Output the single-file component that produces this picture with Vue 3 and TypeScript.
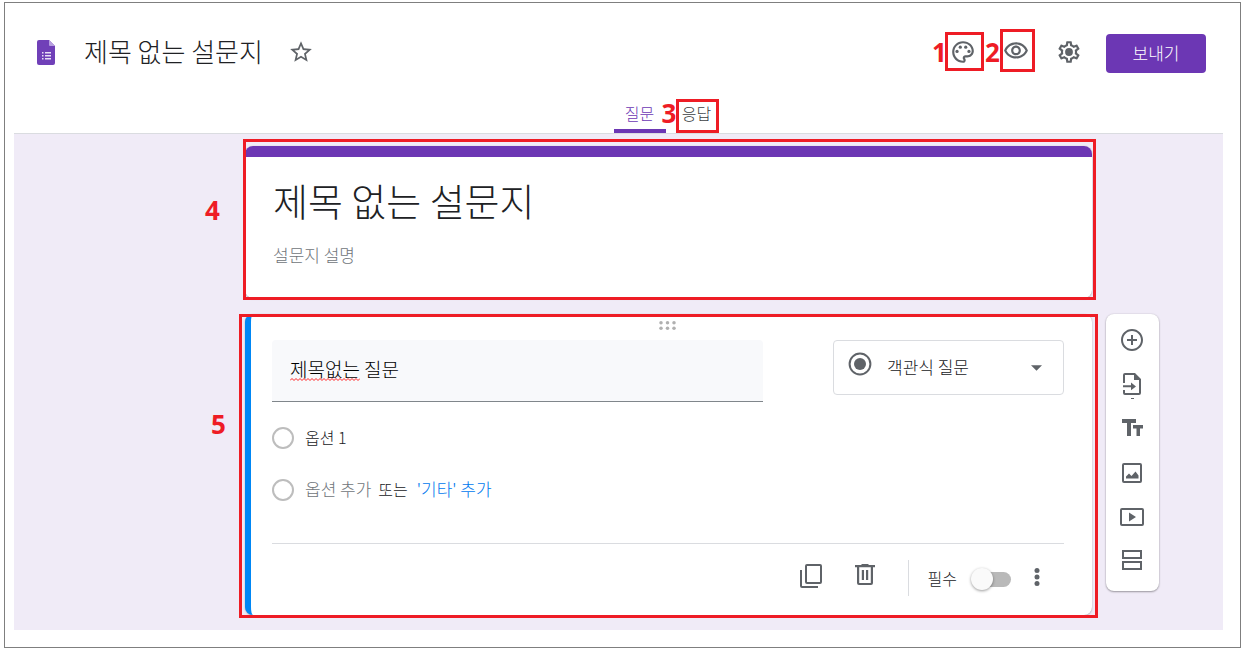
<script setup lang="ts">
import { ref } from 'vue'

interface Tool {
  label: string
  path: string
}

const formName = ref('제목 없는 설문지')
const formTitle = ref('제목 없는 설문지')
const description = ref('')
const question = ref('제목없는 질문')
const option = ref('옵션 1')
const kind = ref('객관식 질문')
const required = ref(false)
const tab = ref('questions')

const tools: Tool[] = [
  {
    label: '질문 추가',
    path: 'M13 7h-2v4H7v2h4v4h2v-4h4v-2h-4V7zm-1-6C5.93 1 1 5.93 1 12s4.93 11 11 11 11-4.93 11-11S18.07 1 12 1zm0 20c-4.96 0-9-4.04-9-9s4.04-9 9-9 9 4.04 9 9-4.04 9-9 9z',
  },
  {
    label: '질문 가져오기',
    path: 'M3 11V3a2 2 0 0 1 2-2h10l6 6v14a2 2 0 0 1-2 2H5a2 2 0 0 1-2-2v-3h2v3h14V8h-5V3H5v8zM3 13.3h8V10.500l5 3.900-5 3.900v-3H3zM11 26h3v1h-3z',
  },
  {
    label: '제목 및 설명 추가',
    path: 'M2 3h14v4h-5v13H7V7H2zM13 9h10v3.500h-3V20h-3.500v-7.500H13z',
  },
  {
    label: '이미지 추가',
    path: 'M4 3h16a2 2 0 0 1 2 2v16a2 2 0 0 1-2 2H4a2 2 0 0 1-2-2V5a2 2 0 0 1 2-2zm0 2v16h16V5zM6 18.500v-2l3-3 2.500 2.500 4-4.500 3 4v3z',
  },
  {
    label: '동영상 추가',
    path: 'M2 4h20a2 2 0 0 1 2 2v14a2 2 0 0 1-2 2H2a2 2 0 0 1-2-2V6a2 2 0 0 1 2-2zm0 2v14h20V6zM9 8.500l7 4.500-7 4.500z',
  },
  {
    label: '섹션 추가',
    path: 'M2 2h20v9H2zm2 2v5h16V4zM2 13h20v9H2zm2 2v5h16v-5z',
  },
]
</script>

<template>
  <div class="frame">
    <header>
      <div class="bar">
        <svg class="logo" viewBox="0 0 18 25" aria-hidden="true">
          <path d="M2 0h10l6 6v17a2 2 0 0 1-2 2H2a2 2 0 0 1-2-2V2a2 2 0 0 1 2-2z" fill="#7040b8" />
          <path d="M12 0l6 6h-5a1 1 0 0 1-1-1z" fill="#b79fe0" />
          <path d="M5 12h1.500v1.500H5zm0 3h1.500v1.500H5zm0 3h1.500v1.500H5zm3-6h6v1.500H8zm0 3h6v1.500H8zm0 3h6v1.500H8z" fill="#e8dff5" />
        </svg>
        <input v-model="formName" class="form-name" aria-label="설문지 이름" />
        <button class="icon-btn star" aria-label="별표">
          <svg viewBox="0 0 24 24"><path d="M22 9.24l-7.19-.62L12 2 9.190 8.630 2 9.240l5.460 4.730L5.820 21 12 17.270 18.180 21l-1.630-7.030L22 9.240zM12 15.400l-3.760 2.270 1-4.280-3.320-2.880 4.380-.38L12 6.100l1.710 4.040 4.380.38-3.320 2.880 1 4.280L12 15.400z" /></svg>
        </button>
        <div class="actions">
          <div class="marked m1">
            <span class="num">1</span>
            <button class="icon-btn" aria-label="테마 맞춤설정">
              <svg viewBox="0 0 24 24"><path d="M12 22C6.490 22 2 17.510 2 12S6.490 2 12 2s10 4.040 10 9c0 3.310-2.690 6-6 6h-1.770c-.28 0-.5.22-.5.5 0 .12.05.23.13.33.41.47.64 1.060.64 1.670 0 1.380-1.120 2.500-2.500 2.500zm0-18c-4.410 0-8 3.590-8 8s3.590 8 8 8c.28 0 .5-.22.5-.5 0-.16-.08-.28-.14-.35-.41-.46-.63-1.050-.63-1.650 0-1.380 1.120-2.500 2.500-2.500H16c2.210 0 4-1.790 4-4 0-3.860-3.590-7-8-7z" /><circle cx="6.5" cy="11.5" r="1.5" /><circle cx="9.5" cy="7.5" r="1.5" /><circle cx="14.5" cy="7.5" r="1.5" /><circle cx="17.5" cy="11.5" r="1.5" /></svg>
            </button>
          </div>
          <div class="marked m2">
            <span class="num">2</span>
            <button class="icon-btn" aria-label="미리보기">
              <svg viewBox="0 0 24 24"><path d="M12 5c3.790 0 7.170 2.130 8.820 5.500C19.170 13.870 15.790 16 12 16s-7.170-2.130-8.820-5.500C4.830 7.130 8.210 5 12 5m0-2C7 3 2.730 6.110 1 10.500 2.730 14.890 7 18 12 18s9.270-3.110 11-7.500C21.270 6.110 17 3 12 3zm0 5c1.380 0 2.500 1.120 2.500 2.500S13.380 13 12 13s-2.500-1.120-2.500-2.500S10.620 8 12 8m0-2c-2.480 0-4.500 2.020-4.500 4.500S9.520 15 12 15s4.500-2.020 4.500-4.500S14.480 6 12 6z" /></svg>
            </button>
          </div>
          <button class="icon-btn" aria-label="설정">
            <svg viewBox="0 0 24 24"><path d="M19.430 12.980c.04-.32.07-.64.07-.98 0-.34-.03-.66-.07-.98l2.110-1.650c.19-.15.24-.42.12-.64l-2-3.460c-.09-.16-.26-.25-.44-.25-.06 0-.12.01-.17.03l-2.490 1c-.52-.4-1.080-.73-1.690-.98l-.38-2.650C14.460 2.180 14.250 2 14 2h-4c-.25 0-.46.18-.49.42l-.38 2.650c-.61.25-1.170.59-1.690.98l-2.490-1c-.06-.02-.12-.03-.18-.03-.17 0-.34.09-.43.25l-2 3.460c-.13.22-.07.49.12.64l2.110 1.650c-.04.32-.07.65-.07.98 0 .33.03.66.07.98l-2.110 1.650c-.19.15-.24.42-.12.64l2 3.460c.09.16.26.25.44.25.06 0 .12-.01.17-.03l2.490-1c.52.4 1.080.73 1.690.98l.38 2.650c.03.24.24.42.49.42h4c.25 0 .46-.18.49-.42l.38-2.650c.61-.25 1.170-.59 1.690-.98l2.490 1c.06.02.12.03.18.03.17 0 .34-.09.43-.25l2-3.460c.12-.22.07-.49-.12-.64l-2.110-1.650zm-1.980-1.710c.04.31.05.52.05.73 0 .21-.02.43-.05.73l-.14 1.130.89.7 1.080.84-.7 1.210-1.270-.51-1.040-.42-.9.68c-.43.32-.84.56-1.250.73l-1.060.43-.16 1.130-.2 1.350h-1.400l-.19-1.350-.16-1.130-1.060-.43c-.43-.18-.83-.41-1.230-.71l-.91-.7-1.060.43-1.270.51-.7-1.210 1.080-.84.89-.7-.14-1.130c-.03-.31-.05-.54-.05-.74s.02-.43.05-.73l.14-1.130-.89-.7-1.080-.84.7-1.210 1.270.51 1.040.42.9-.68c.43-.32.84-.56 1.250-.73l1.060-.43.16-1.130.2-1.350h1.390l.19 1.350.16 1.130 1.060.43c.43.18.83.41 1.230.71l.91.7 1.060-.43 1.270-.51.7 1.210-1.070.85-.89.7.14 1.130z" /><circle cx="12" cy="12" r="3.6" /></svg>
          </button>
          <button class="send">보내기</button>
        </div>
      </div>
      <nav class="tabs" role="tablist">
        <button role="tab" class="tab first" :class="{ active: tab === 'questions' }" :aria-selected="tab === 'questions'" @click="tab = 'questions'">질문</button>
        <div class="marked m3">
          <span class="num">3</span>
          <button role="tab" class="tab second" :class="{ active: tab === 'answers' }" :aria-selected="tab === 'answers'" @click="tab = 'answers'">응답</button>
        </div>
      </nav>
    </header>

    <main>
      <div class="column">
        <section class="card intro marked m4">
          <span class="num">4</span>
          <input v-model="formTitle" class="form-title" aria-label="설문지 제목" />
          <input v-model="description" class="form-desc" placeholder="설문지 설명" aria-label="설문지 설명" />
        </section>

        <section class="card question marked m5">
          <span class="num">5</span>
          <div class="handle" aria-hidden="true">
            <svg viewBox="0 0 18 9"><circle v-for="n in 6" :key="n" :cx="2 + ((n - 1) % 3) * 6.5" :cy="n > 3 ? 7.25 : 1.75" r="1.75" /></svg>
          </div>
          <div class="top-row">
            <div class="field">
              <input v-model="question" aria-label="질문" spellcheck="false" />
              <svg class="squiggle" viewBox="0 0 70 3" aria-hidden="true"><path d="M0 2.500l2-2 2 2 2-2 2 2 2-2 2 2 2-2 2 2 2-2 2 2 2-2 2 2 2-2 2 2 2-2 2 2 2-2 2 2 2-2 2 2 2-2 2 2 2-2 2 2 2-2 2 2 2-2 2 2 2-2 2 2 2-2 2 2 2-2 2 2 2-2" /></svg>
            </div>
            <div class="kind">
              <svg class="kind-icon" viewBox="0 0 24 24" aria-hidden="true"><circle cx="12" cy="12" r="10.4" fill="none" stroke="#5f6368" stroke-width="2" /><circle cx="12" cy="12" r="6" /></svg>
              <select v-model="kind" aria-label="질문 유형">
                <option>객관식 질문</option>
                <option>단답형</option>
              </select>
              <svg class="caret" viewBox="0 0 12 6" aria-hidden="true"><path d="M0 0h12L6 6z" /></svg>
            </div>
          </div>
          <div class="option">
            <input type="radio" name="choice" aria-label="옵션 1 선택" />
            <input v-model="option" class="option-text" aria-label="옵션 이름" />
          </div>
          <div class="option">
            <input type="radio" name="choice" aria-label="새 옵션" />
            <button class="text-btn muted">옵션 추가</button>
            <span class="or">또는</span>
            <button class="text-btn blue">'기타' 추가</button>
          </div>
          <footer>
            <button class="icon-btn copy" aria-label="복사">
              <svg viewBox="0 0 24 24"><path d="M7 0h13a2 2 0 0 1 2 2v16a2 2 0 0 1-2 2H7a2 2 0 0 1-2-2V2a2 2 0 0 1 2-2zm0 2v16h13V2zM0 6h2v16h16v2H2a2 2 0 0 1-2-2z" /></svg>
            </button>
            <button class="icon-btn trash" aria-label="삭제">
              <svg viewBox="0 0 24 24"><path d="M9 0h6l1 1h6v2.200h-2V19a2 2 0 0 1-2 2H6a2 2 0 0 1-2-2V3.200H2V1h6zM6.200 3.200V19h11.600V3.200zM8.800 6H11v10H8.800zM13 6h2.200v10H13z" /></svg>
            </button>
            <span class="rule"></span>
            <label class="required">
              <span>필수</span>
              <input v-model="required" type="checkbox" />
            </label>
            <button class="icon-btn more" aria-label="더보기">
              <svg viewBox="0 0 24 24"><circle cx="12" cy="4.5" r="2.5" /><circle cx="12" cy="11" r="2.500" /><circle cx="12" cy="17.500" r="2.500" /></svg>
            </button>
          </footer>
        </section>
      </div>

      <aside class="toolbar" aria-label="추가 도구">
        <button v-for="t in tools" :key="t.label" class="tool" :aria-label="t.label">
          <svg viewBox="0 0 24 24"><path fill-rule="evenodd" :d="t.path" /></svg>
        </button>
      </aside>
    </main>
  </div>
</template>

<style>
body {
  background: #fff;
}
</style>

<style scoped>
* {
  box-sizing: border-box;
}
.frame {
  display: flow-root;
  margin: 2px 7px 3px 4px;
  border: 1px solid #7f7f7f;
  color: #202124;
  font-family: "Noto Sans CJK KR", "Noto Sans", sans-serif;
  font-size: 16px;
  font-weight: 300;
  line-height: 24px;
}
button,
input,
select {
  margin: 0;
  padding: 0;
  border: 0;
  outline: 0;
  background: none;
  color: inherit;
  font: inherit;
}
button {
  cursor: pointer;
}
svg {
  display: block;
  fill: #5f6368;
}
.icon-btn {
  display: grid;
  place-items: center;
  flex: none;
  width: 40px;
  height: 40px;
}
.icon-btn svg {
  width: 26px;
  height: 26px;
}
.bar {
  display: flex;
  align-items: center;
  height: 98px;
  padding: 0 34px 0 32px;
}
.logo {
  flex: none;
  width: 18px;
  height: 25px;
}
.form-name {
  width: 184px;
  height: 40px;
  margin-left: 29px;
  padding-bottom: 3px;
  font-size: 26px;
}
.star {
  margin-left: 13px;
}
.actions {
  display: flex;
  align-items: center;
  gap: 13px;
  margin-left: auto;
}
.send {
  width: 100px;
  height: 39px;
  margin: 2px 0 0 4px;
  border-radius: 4px;
  background: #6c37b4;
  color: #fff;
  font-size: 17px;
}
.tabs {
  display: flex;
  justify-content: center;
  gap: 10px;
  margin: 0 148px 0 240px;
}
.tab {
  height: 32px;
  padding-bottom: 10px;
  color: #3c4043;
}
.first {
  width: 52px;
}
.second {
  width: 48px;
  padding-right: 6px;
}
.tab.active {
  padding-bottom: 6px;
  border-bottom: 4px solid #6c37b4;
  border-radius: 4px 4px 0 0;
  color: #6c37b4;
}

/* Numbered callouts drawn over the interface */
.marked {
  position: relative;
}
.marked::after {
  position: absolute;
  z-index: 2;
  border: 3px solid #ee1c25;
  content: "";
  pointer-events: none;
}
.num {
  position: absolute;
  z-index: 2;
  color: #ee1c25;
  font-family: "Noto Sans", "Open Sans", sans-serif;
  font-size: 26px;
  font-weight: 700;
  line-height: 30px;
}
.m1::after {
  inset: 0 -1px 1px 2px;
}
.m1 .num {
  top: 5px;
  left: -11px;
}
.m2::after {
  inset: -3px 1px 0 4px;
}
.m2 .num {
  top: 5px;
  left: -11px;
}
.m3::after {
  inset: -2px 5px 0 0;
}
.m3 .num {
  top: -3px;
  left: -14px;
}
.m4::after {
  inset: -7px -4px -2px -2px;
}
.m4 .num {
  top: 49px;
  left: -40px;
}
.m5::after {
  inset: 0 -6px -3px -12px;
}
.m5 .num {
  top: 95px;
  left: -40px;
}

main {
  display: flex;
  align-items: flex-start;
  gap: 14px;
  margin: 0 17px 17px 9px;
  padding: 12px 64px 15px 231px;
  border-top: 1px solid #dadce0;
  background: #f0ebf7;
}
.column {
  display: grid;
  flex: 1;
  gap: 16px;
  min-width: 0;
}
.card {
  border-radius: 8px;
  background: #fff;
  box-shadow: 0 1px 2px #0003, 0 0 1px #0003;
}
.intro {
  display: flex;
  flex-direction: column;
  padding: 18px 28px 28px;
}
.intro::before {
  height: 11px;
  margin: -18px -28px 15px;
  border-radius: 8px 8px 0 0;
  background: #6c37b4;
  content: "";
}
.form-title {
  height: 54px;
  font-size: 38px;
}
.form-desc {
  height: 30px;
  margin-top: 14px;
  padding-bottom: 2px;
  font-size: 17px;
}
.form-desc::placeholder {
  color: #70757a;
  opacity: 1;
}
.question {
  padding: 0 28px 0 21px;
  border-left: 6px solid #0087f5;
}
.handle {
  display: grid;
  place-items: center;
  height: 26px;
  padding-bottom: 4px;
}
.handle svg {
  width: 18px;
  height: 9px;
  fill: #b0b0b0;
}
.top-row {
  display: flex;
  align-items: flex-start;
  gap: 70px;
  margin-bottom: 10px;
}
.field {
  position: relative;
  flex: 1;
  min-width: 0;
}
.field input {
  width: 100%;
  height: 62px;
  padding: 0 18px 4px;
  border-bottom: 1px solid #80868b;
  border-radius: 4px 4px 0 0;
  background: #f8f9fb;
  color: #000;
  font-size: 19px;
}
.squiggle {
  position: absolute;
  top: 38px;
  left: 18px;
  width: 70px;
  height: 3px;
  fill: none;
  stroke: #f22;
}
.kind {
  position: relative;
  flex: none;
  width: 231px;
}
.kind select {
  width: 100%;
  height: 55px;
  padding: 0 40px 2px 53px;
  border: 1px solid #dadce0;
  border-radius: 4px;
  appearance: none;
  font-size: 17px;
}
.kind-icon {
  position: absolute;
  top: 12px;
  left: 15px;
  width: 24px;
  height: 24px;
}
.caret {
  position: absolute;
  top: 25px;
  right: 22px;
  width: 11px;
  height: 6px;
}
.option {
  display: flex;
  align-items: center;
  height: 52px;
}
input[type="radio"] {
  flex: none;
  width: 22px;
  height: 22px;
  margin-right: 11px;
  border: 2px solid #bdbdbd;
  border-radius: 50%;
  appearance: none;
}
input[type="radio"]:checked {
  box-shadow: inset 0 0 0 4px #fff;
  background: #5f6368;
}
.option-text {
  flex: 1;
}
.option-text,
.text-btn,
.or {
  padding-bottom: 2px;
}
.muted {
  color: #70757a;
  font-size: 17px;
}
.or {
  margin: 0 9px 0 7px;
}
.blue {
  color: #0078ee;
  font-size: 17px;
}
footer {
  display: flex;
  align-items: center;
  justify-content: flex-end;
  height: 72px;
  margin-top: 27px;
  padding-bottom: 4px;
  border-top: 1px solid #dadce0;
}
.copy svg,
.trash svg,
.more svg {
  width: 24px;
  height: 24px;
}
.copy,
.trash {
  padding-bottom: 3px;
}
.copy {
  margin-right: 13px;
}
.rule {
  width: 1px;
  height: 36px;
  margin: 0 19px 0 23px;
  background: #dadce0;
}
.required {
  display: flex;
  align-items: center;
  gap: 14px;
}
.required input {
  position: relative;
  width: 40px;
  height: 24px;
  appearance: none;
}
.required input::before {
  position: absolute;
  inset: 6px 0 3px 4px;
  border-radius: 8px;
  background: #b9b9b9;
  content: "";
}
.required input::after {
  position: absolute;
  top: 2px;
  left: 0;
  width: 22px;
  height: 22px;
  border-radius: 50%;
  background: #fafafa;
  box-shadow: 0 1px 3px #0006;
  content: "";
}
.required input:checked::after {
  left: 18px;
}
.more {
  margin: 0 7px 0 6px;
}
.toolbar {
  display: flex;
  flex: none;
  flex-direction: column;
  width: 53px;
  margin-top: 168px;
  padding: 4px 1px 9px 0;
  border-radius: 8px;
  background: #fff;
  box-shadow: 0 1px 2px #0005, 0 0 2px #0002;
}
.tool {
  display: grid;
  place-items: center;
  height: 44px;
}
.tool svg {
  width: 24px;
  height: 24px;
  overflow: visible;
}
</style>
